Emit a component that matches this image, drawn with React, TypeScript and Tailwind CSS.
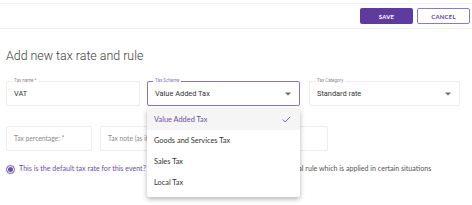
import React from 'react'

const font = { fontFamily: 'Lato, "Noto Sans", sans-serif' }

const Caret = () => (
  <svg width="6" height="4" viewBox="0 0 6 4" className="text-[#6b6b6b]">
    <path d="M0 0.5h6L3 3.5z" fill="currentColor" />
  </svg>
)

const Check = () => (
  <svg width="9" height="7" viewBox="0 0 9 7" fill="none">
    <path d="M0.8 3.6l2.4 2.4L8.2 0.8" stroke="#6b4fa8" strokeWidth="0.9" />
  </svg>
)

const Field: React.FC<{
  label?: string
  value?: string
  placeholder?: string
  width: string
  focused?: boolean
  select?: boolean
}> = ({ label, value, placeholder, width, focused, select }) => (
  <div
    className={`relative h-[25px] ${width} rounded-[2px] flex items-center px-[7px] ${
      focused ? 'border-[1.5px] border-[#8b72c0]' : 'border border-[#ebebf0]'
    }`}
  >
    {label && (
      <span
        className={`absolute -top-[4px] left-[5px] bg-white px-[2px] text-[4.5px] leading-[6px] ${
          focused ? 'text-[#8b72c0]' : 'text-[#8a8a8a]'
        }`}
        style={{ fontFamily: 'Roboto, sans-serif' }}
      >
        {label}
      </span>
    )}
    {value && (
      <span className="text-[7.4px] text-[#333] leading-none" style={{ fontFamily: 'Roboto, sans-serif' }}>
        {value}
      </span>
    )}
    {placeholder && <span className="text-[6.7px] text-[#8a8a8a] leading-none whitespace-nowrap">{placeholder}</span>}
    {select && (
      <span className="ml-auto mr-[1px] flex items-center">
        <Caret />
      </span>
    )}
  </div>
)

export default function App() {
  const options = ['Value Added Tax', 'Goods and Services Tax', 'Sales Tax', 'Local Tax']
  return (
    <div className="relative w-[472px] h-[205px] bg-white overflow-hidden" style={font}>
      <div className="mt-[3px] border-t border-[#f3f3f3]" />
      <div className="flex justify-end gap-[4px] pr-[2px] pt-[4px] pb-[4px] border-b border-[#efefef]">
        <button className="w-[53px] h-[16px] rounded-[2px] bg-[#5e3c9e] text-white text-[6px] font-bold tracking-[0.2px]">
          SAVE
        </button>
        <button className="w-[53px] h-[16px] rounded-[2px] border border-[#8f79c2] bg-white text-[#5e3c9e] text-[6px] font-bold tracking-[0.2px]">
          CANCEL
        </button>
      </div>

      <h1
        className="mt-[19px] ml-[6px] text-[12.4px] leading-[16px] font-light text-[#3d3d3d]"
        style={{ fontFamily: 'Roboto, sans-serif' }}
      >
        Add new tax rate and rule
      </h1>

      <div className="mt-[17px] ml-[6px] flex">
        <Field label="Tax name *" value="VAT" width="w-[134px]" />
        <div className="relative ml-[7px]">
          <Field label="Tax Scheme" value="Value Added Tax" width="w-[153px]" focused select />
          <div className="absolute left-0 top-[28px] w-[153px] pb-[4px] bg-white rounded-[2px] shadow-[0_2px_5px_rgba(0,0,0,0.3)] z-10 text-[7.4px] text-[#333]">
            {options.map((o, i) => (
              <div
                key={o}
                className={`h-[21px] flex items-center px-[7px] ${i === 0 ? 'bg-[#f5f5f5] text-[#6b4fa8]' : ''}`}
              >
                {o}
                {i === 0 && (
                  <span className="ml-auto mr-[2px] flex">
                    <Check />
                  </span>
                )}
              </div>
            ))}
          </div>
        </div>
        <div className="ml-[9px]">
          <Field label="Tax Category" value="Standard rate" width="w-[151px]" select />
        </div>
      </div>

      <div className="mt-[20px] ml-[6px] flex gap-[8px]">
        <Field placeholder="Tax percentage: *" width="w-[86px]" />
        <Field placeholder="Tax note (as it appears on the invoice)" width="w-[228px]" />
      </div>

      <div className="mt-[13px] ml-[6px] flex items-center text-[7.1px] leading-[10px] whitespace-nowrap">
        <span className="w-[9px] h-[9px] rounded-full border border-[#6b4fa8] flex items-center justify-center">
          <span className="w-[5px] h-[5px] rounded-full bg-[#6b4fa8]" />
        </span>
        <span className="ml-[4px] text-[#6b4fa8]">This is the default tax rate for this event?</span>
        <span className="ml-[110px] text-[#555]">This is a special rule which is applied in certain situations</span>
      </div>
    </div>
  )
}
